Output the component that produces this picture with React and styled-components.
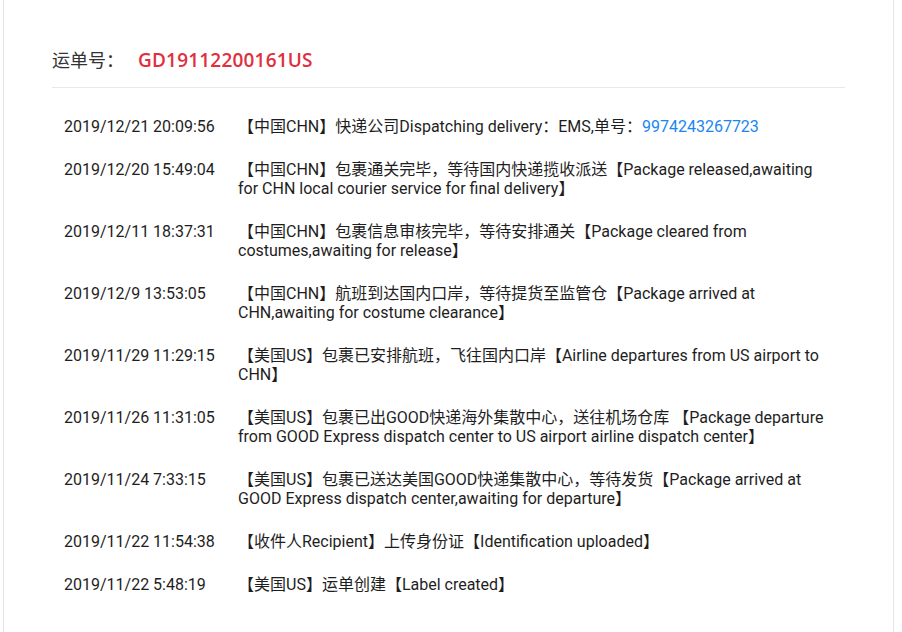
import React from 'react'
import styled, { createGlobalStyle } from 'styled-components';

const GlobalStyle = createGlobalStyle`
  html, body {
    margin: 0;
    padding: 0;
    background: #fff;
  }
  body {
    font-family: Roboto, "Noto Sans CJK SC", sans-serif;
    color: #333;
  }
`;

const Card = styled.div`
  box-sizing: border-box;
  margin-left: 3px;
  width: 891px;
  min-height: 640px;
  padding: 0 48px;
  border-left: 1px solid #e6e6e6;
  border-right: 1px solid #e6e6e6;
`;

const Header = styled.div`
  display: flex;
  align-items: center;
  padding: 48px 0 15px;
  border-bottom: 1px solid #e8e8e8;
  line-height: 24px;
`;

const Label = styled.span`
  font-family: "Open Sans", "Noto Sans CJK SC", sans-serif;
  font-size: 18px;
  color: #333;
`;

const Waybill = styled.span`
  margin-left: 14px;
  font-family: "Open Sans", sans-serif;
  font-size: 19px;
  font-weight: 600;
  letter-spacing: 0.2px;
  color: #e0303e;
`;

const List = styled.ul`
  list-style: none;
  margin: 0;
  padding: 17px 0 0;
`;

const Row = styled.li`
  display: grid;
  grid-template-columns: 174px 1fr;
  padding: 12px;
  font-size: 16px;
  line-height: 19px;
  color: #1e1e1e;
`;

const Time = styled.span`
  white-space: nowrap;
`;

const Desc = styled.span``;

const TrackNo = styled.span`
  color: #1a86f0;
`;

const events = [
  { time: '2019/12/21 20:09:56', text: '【中国CHN】快递公司Dispatching delivery：EMS,单号：', no: '9974243267723' },
  { time: '2019/12/20 15:49:04', text: '【中国CHN】包裹通关完毕，等待国内快递揽收派送【Package released,awaiting for CHN local courier service for final delivery】' },
  { time: '2019/12/11 18:37:31', text: '【中国CHN】包裹信息审核完毕，等待安排通关【Package cleared from costumes,awaiting for release】' },
  { time: '2019/12/9 13:53:05', text: '【中国CHN】航班到达国内口岸，等待提货至监管仓【Package arrived at CHN,awaiting for costume clearance】' },
  { time: '2019/11/29 11:29:15', text: '【美国US】包裹已安排航班，飞往国内口岸【Airline departures from US airport to CHN】' },
  { time: '2019/11/26 11:31:05', text: '【美国US】包裹已出GOOD快递海外集散中心，送往机场仓库 【Package departure from GOOD Express dispatch center to US airport airline dispatch center】' },
  { time: '2019/11/24 7:33:15', text: '【美国US】包裹已送达美国GOOD快递集散中心，等待发货【Package arrived at GOOD Express dispatch center,awaiting for departure】' },
  { time: '2019/11/22 11:54:38', text: '【收件人Recipient】上传身份证【Identification uploaded】' },
  { time: '2019/11/22 5:48:19', text: '【美国US】运单创建【Label created】' },
];

const App = () => {
  return (
    <>
      <GlobalStyle />
      <Card>
        <Header>
          <Label>运单号：</Label>
          <Waybill>GD19112200161US</Waybill>
        </Header>
        <List>
          {events.map((e) => (
            <Row key={e.time}>
              <Time>{e.time}</Time>
              <Desc>
                {e.text}
                {e.no && <TrackNo>{e.no}</TrackNo>}
              </Desc>
            </Row>
          ))}
        </List>
      </Card>
    </>
  )
}

export default App
